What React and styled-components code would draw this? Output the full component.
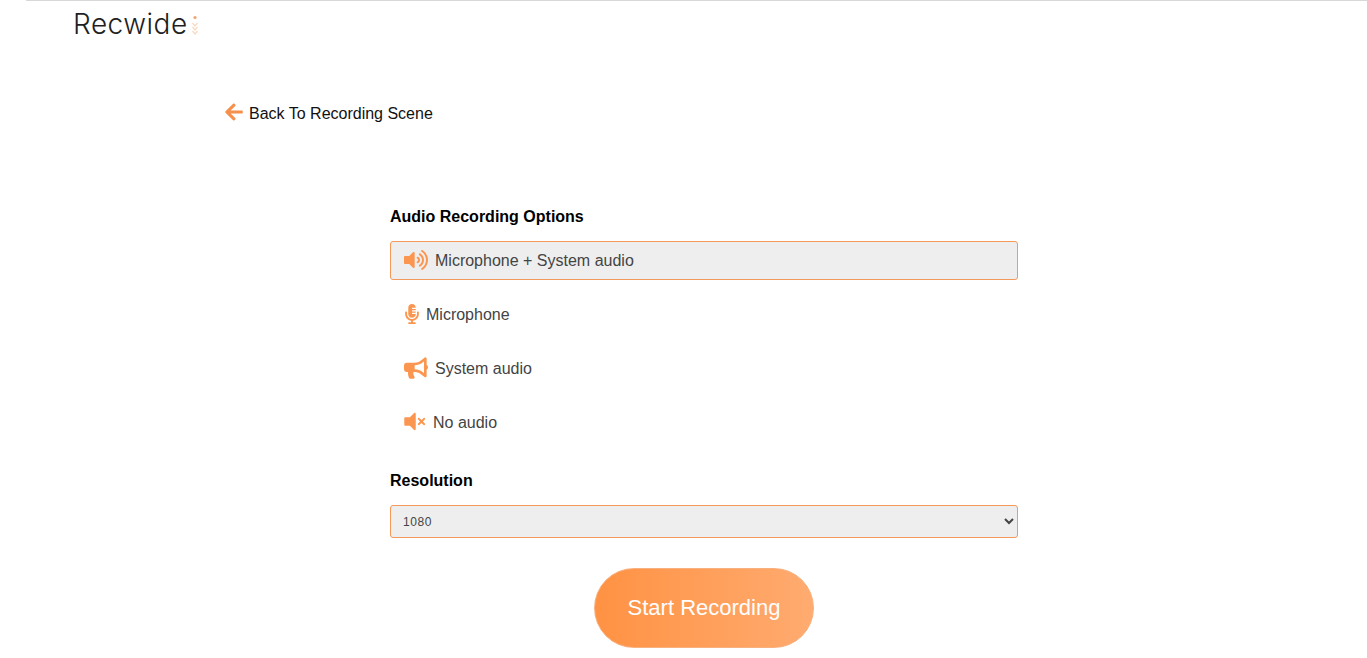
import React from "react";
import styled, { createGlobalStyle } from "styled-components";
import { FaArrowLeft, FaVolumeUp, FaMicrophoneAlt, FaBullhorn, FaVolumeOff, FaTimes } from "react-icons/fa";

const Global = createGlobalStyle`
  html, body { margin: 0; padding: 0; background: #fff; }
  body { font-family: "Liberation Sans", Arial, sans-serif; overflow: hidden; }
`;

const Page = styled.div`
  width: 1367px;
  height: 658px;
  display: flex;
  flex-direction: column;
  overflow: hidden;
`;

const Header = styled.header`
  margin-left: 26px;
  height: 53px;
  padding: 8px 0 0 47px;
  box-sizing: border-box;
  border-top: 1px solid #d8d8d8;
`;

const Logo = styled.div`
  display: flex;
  align-items: flex-start;
  gap: 3px;
`;

const LogoText = styled.span`
  font-family: Inter, "Open Sans", sans-serif;
  font-weight: 300;
  font-size: 28px;
  line-height: 30px;
  color: #1f1f1f;
  letter-spacing: 0.5px;
`;

const LogoMark = styled.svg`
  width: 8px;
  height: 22px;
  margin-top: 6px;
`;

const BackRow = styled.a`
  display: flex;
  align-items: center;
  gap: 5px;
  margin: 49px 0 0 224px;
  height: 24px;
  color: #111;
  font-size: 16px;
  text-decoration: none;
  svg {
    color: #f68f4a;
    font-size: 20px;
    margin-top: -5px;
  }
`;

const Form = styled.form`
  width: 628px;
  margin: 81px 0 0 390px;
  display: flex;
  flex-direction: column;
`;

const Heading = styled.h3`
  margin: 0;
  font-size: 16px;
  line-height: 20px;
  font-weight: 700;
  color: #000;
`;

const OptionList = styled.div`
  margin-top: 14px;
  display: flex;
  flex-direction: column;
  gap: 15px;
`;

const Option = styled.div`
  height: 39px;
  box-sizing: border-box;
  display: flex;
  align-items: center;
  gap: ${(p) => p.$gap}px;
  padding-left: 13px;
  border: 1px solid ${(p) => (p.$active ? "#f3995c" : "transparent")};
  border-radius: 3px;
  background: ${(p) => (p.$active ? "#eeeeee" : "transparent")};
  color: #444444;
  font-size: 16px;
  svg {
    color: #fb9650;
    flex: none;
    width: ${(p) => p.$iconW}px;
    height: ${(p) => p.$iconH}px;
    margin-top: -2px;
  }
`;

const MuteIcon = styled.span`
  display: inline-flex;
  align-items: center;
  svg {
    width: 12px;
    height: 23px;
  }
  svg + svg {
    width: 9px;
    height: 11px;
    margin-left: 1px;
  }
`;

const ResolutionHeading = styled(Heading)`
  margin-top: 29px;
`;

const Select = styled.select`
  margin-top: 14px;
  height: 33px;
  width: 100%;
  box-sizing: border-box;
  padding-left: 8px;
  border: 1px solid #f3995c;
  border-radius: 3px;
  background-color: #eeeeee;
  color: #444444;
  font-family: "Liberation Sans", Arial, sans-serif;
  font-size: 12px;
  letter-spacing: 0.6px;
  outline: none;
`;

const StartButton = styled.button`
  align-self: center;
  margin-top: 30px;
  padding: 0;
  width: 220px;
  height: 80px;
  border: 1px solid #f8b07e;
  border-radius: 40px;
  background: linear-gradient(90deg, #ff9243 0%, #ffab70 100%);
  color: #fff;
  font-family: "Liberation Sans", Arial, sans-serif;
  font-size: 22px;
`;

const options = [
  { label: "Microphone + System audio", Icon: FaVolumeUp, w: 24, h: 24, gap: 7, active: true },
  { label: "Microphone", Icon: FaMicrophoneAlt, w: 16, h: 20, gap: 6 },
  { label: "System audio", Icon: FaBullhorn, w: 24, h: 24, gap: 7 },
];

export default function App() {
  return (
    <Page>
      <Global />
      <Header>
        <Logo>
          <LogoText>Recwide</LogoText>
          <LogoMark viewBox="0 0 8 22">
            <circle cx="4" cy="2.5" r="1.6" fill="#f2a46e" />
            <path d="M1.5 8 L4 11 L6.5 8 M1.5 12 L4 15 L6.5 12 M1.5 16 L4 19 L6.5 16" fill="none" stroke="#f8d9c2" strokeWidth="1.3" />
          </LogoMark>
        </Logo>
      </Header>
      <BackRow href="#">
        <FaArrowLeft />
        Back To Recording Scene
      </BackRow>
      <Form>
        <Heading>Audio Recording Options</Heading>
        <OptionList>
          {options.map(({ label, Icon, w, h, gap, active }) => (
            <Option key={label} $gap={gap} $iconW={w} $iconH={h} $active={active}>
              <Icon />
              {label}
            </Option>
          ))}
          <Option $gap={7}>
            <MuteIcon>
              <FaVolumeOff />
              <FaTimes />
            </MuteIcon>
            No audio
          </Option>
        </OptionList>
        <ResolutionHeading>Resolution</ResolutionHeading>
        <Select defaultValue="1080">
          <option value="1080">1080</option>
          <option value="720">720</option>
          <option value="480">480</option>
        </Select>
        <StartButton type="button">Start Recording</StartButton>
      </Form>
    </Page>
  );
}
